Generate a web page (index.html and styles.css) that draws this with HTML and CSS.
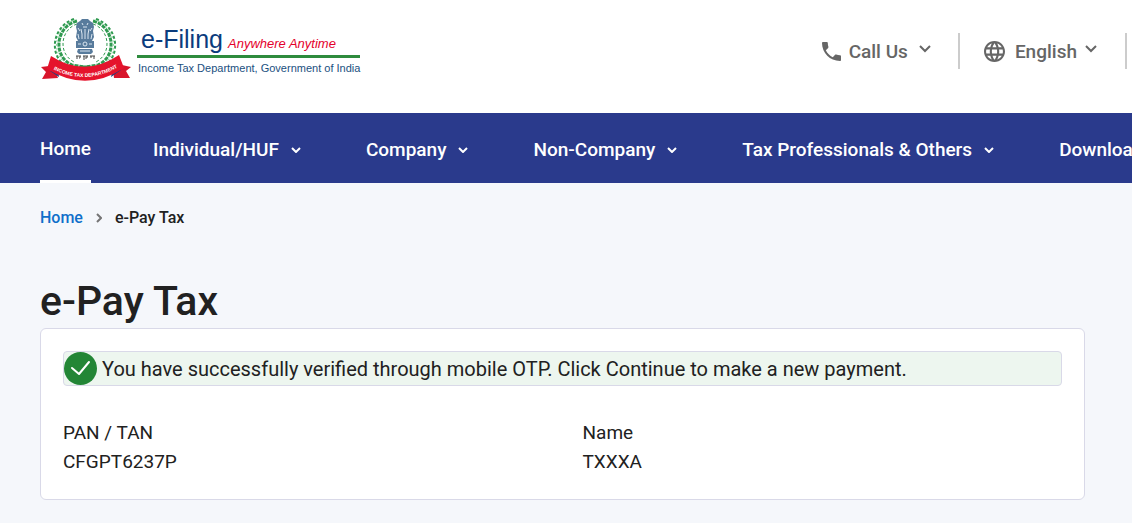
FILE: index.html
```html
<!DOCTYPE html>
<html lang="en">
<head>
    <meta charset="UTF-8" />
    <meta name="viewport" content="width=device-width, initial-scale=1.0"/>
    <title>e-Pay Tax</title>
    <link rel="stylesheet" href="styles.css">
</head>
<body>
    <header class="header">
        <a class="logo" href="#">
            <svg class="emblem" viewBox="0 0 92 64" role="img" aria-label="Income Tax Department emblem">
                <!-- wreath -->
                <g fill="none" stroke="#2f9a50">
                    <path d="M37 3C16 8 12 38 32 47L51 50" stroke-width="3" stroke-dasharray="4 1"/>
                    <path d="M53 3C74 8 78 38 58 47L39 50" stroke-width="3" stroke-dasharray="4 1"/>
                    <path d="M34 1C11 9 8 40 29 50M56 1C79 9 82 40 61 50" stroke-width="2" stroke-dasharray="3 2"/>
                    <path d="M37 6C21 11 17 35 34 44M53 6C69 11 73 35 56 44" stroke-width="1" stroke-dasharray="3 2"/>
                    <path d="M35 2C13 9 10 39 30 48M55 2C77 9 80 39 60 48" stroke="#8fd0a1" stroke-width="1" stroke-dasharray="2 2"/>
                </g>
                <!-- lion capital -->
                <g fill="#587b9c">
                    <path d="M40 3l2-2h6l2 2 3 2 1 4-1 4 1 6-2 4H38l-2-4 1-6-1-4 1-4z"/>
                    <path d="M36 23h18v7H36zM38 31h14l1 3-2 2H39l-2-2z"/>
                </g>
                <g fill="none" stroke="#dbe7f1" stroke-width="1">
                    <path d="M42 5l1 2M48 5l-1 2M43 9h4M41 11l1 5v5M49 11l-1 5v5M45 11v10M38 10l2 3M52 10l-2 3M38 16l1 5M52 16l-1 5"/>
                    <circle cx="45" cy="26" r="2"/>
                    <path d="M38 26h3M49 26h3M40 33h10"/>
                </g>
                <path d="M36 38h5M43 38h5M50 38h5M37 38v3M40 38v2M39 40h1M44 38v4M47 38v2M45 40h2M51 38v2M54 38v3" fill="none" stroke="#444" stroke-width="1"/>
                <!-- ribbon -->
                <path d="M9 48L1 49l5 5-4 7 16-1-3-8zM82 47l9 2-5 4 4 7-16 0-1-8z" fill="#d8152b"/>
                <path d="M10 53l9 6-1-8zM81 52l-10 7 2-9z" fill="#24407c"/>
                <path d="M11 38Q45 60 79 37L84 50Q46 75 7 51Z" fill="#e5132c"/>
                <path id="ribbon-line" d="M9 49Q45 70 82 47" fill="none"/>
                <text class="ribbon-text"><textPath href="#ribbon-line" startOffset="50%">INCOME TAX DEPARTMENT</textPath></text>
            </svg>
            <span class="brand">
                <span class="brand-top">
                    <span class="brand-name">e-Filing</span>
                    <span class="brand-slogan">Anywhere Anytime</span>
                </span>
                <span class="brand-dept">Income Tax Department, Government of India</span>
            </span>
        </a>
        <div class="tools">
            <button class="tool call" type="button">
                <svg class="phone-icon" viewBox="3 3 18 18"><path fill="currentColor" d="M6.62 10.79c1.44 2.83 3.76 5.14 6.59 6.59l2.2-2.2c.27-.27.67-.36 1.02-.24 1.12.37 2.33.57 3.57.57.55 0 1 .45 1 1V20c0 .55-.45 1-1 1-9.39 0-17-7.61-17-17 0-.55.45-1 1-1h3.5c.55 0 1 .45 1 1 0 1.25.2 2.45.57 3.57.11.35.03.74-.25 1.02l-2.2 2.2z"/></svg>
                Call Us
                <svg class="tool-arrow" viewBox="0 0 12 8"><path d="M1 1l5 5 5-5"/></svg>
            </button>
            <button class="tool language" type="button">
                <svg class="globe-icon" viewBox="2 2 20 20"><path fill="currentColor" d="M11.99 2C6.47 2 2 6.48 2 12s4.47 10 9.99 10C17.52 22 22 17.52 22 12S17.52 2 11.99 2zm6.93 6h-2.95c-.32-1.25-.78-2.45-1.38-3.56 1.84.63 3.37 1.91 4.33 3.56zM12 4.04c.83 1.2 1.48 2.53 1.91 3.96h-3.82c.43-1.43 1.08-2.76 1.91-3.96zM4.26 14C4.1 13.36 4 12.69 4 12s.1-1.36.26-2h3.38c-.08.66-.14 1.32-.14 2s.06 1.34.14 2H4.26zm.82 2h2.95c.32 1.25.78 2.45 1.38 3.56-1.84-.63-3.37-1.9-4.33-3.56zm2.95-8H5.08c.96-1.66 2.49-2.93 4.33-3.56C8.81 5.55 8.35 6.75 8.03 8zM12 19.96c-.83-1.2-1.48-2.53-1.91-3.96h3.82c-.43 1.43-1.08 2.76-1.91 3.96zM14.34 14H9.66c-.09-.66-.16-1.32-.16-2s.07-1.35.16-2h4.68c.09.65.16 1.32.16 2s-.07 1.34-.16 2zm.25 5.56c.6-1.11 1.06-2.31 1.38-3.56h2.95c-.96 1.65-2.49 2.93-4.33 3.56zM16.36 14c.08-.66.14-1.32.14-2s-.06-1.34-.14-2h3.38c.16.64.26 1.31.26 2s-.1 1.36-.26 2h-3.38z"/></svg>
                English
                <svg class="tool-arrow" viewBox="0 0 12 8"><path d="M1 1l5 5 5-5"/></svg>
            </button>
        </div>
    </header>

    <nav class="navbar">
        <a class="nav-item active" href="#">Home</a>
        <button class="nav-item" type="button">Individual/HUF <svg class="nav-arrow" viewBox="0 0 10 6"><path d="M1 1l4 4 4-4"/></svg></button>
        <button class="nav-item" type="button">Company <svg class="nav-arrow" viewBox="0 0 10 6"><path d="M1 1l4 4 4-4"/></svg></button>
        <button class="nav-item" type="button">Non-Company <svg class="nav-arrow" viewBox="0 0 10 6"><path d="M1 1l4 4 4-4"/></svg></button>
        <button class="nav-item" type="button">Tax Professionals &amp; Others <svg class="nav-arrow" viewBox="0 0 10 6"><path d="M1 1l4 4 4-4"/></svg></button>
        <a class="nav-item" href="#">Downloads</a>
    </nav>

    <main class="content">
        <nav class="breadcrumb" aria-label="Breadcrumb">
            <a href="#">Home</a>
            <svg class="crumb-arrow" viewBox="0 0 6 10"><path d="M1 1l4 4-4 4"/></svg>
            <span>e-Pay Tax</span>
        </nav>

        <h1 class="title">e-Pay Tax</h1>

        <section class="card">
            <div class="alert" role="status">
                <svg class="check-icon" viewBox="0 0 33 33"><circle cx="16.5" cy="16.5" r="16.5" fill="#238636"/><path d="M8 16l7 6L25 10" fill="none" stroke="#fff" stroke-width="2" stroke-linecap="round" stroke-linejoin="round"/></svg>
                <span>You have successfully verified through mobile OTP. Click Continue to make a new payment.</span>
            </div>
            <dl class="details">
                <div>
                    <dt>PAN / TAN</dt>
                    <dd>CFGPT6237P</dd>
                </div>
                <div>
                    <dt>Name</dt>
                    <dd>TXXXA</dd>
                </div>
            </dl>
        </section>
    </main>
</body>
</html>
```
FILE: styles.css
```css
* {
    box-sizing: border-box;
}

body {
    margin: 0;
    font-family: Roboto, sans-serif;
    background: #f5f7fb;
    color: #212121;
    overflow-x: hidden;
}

button {
    font-family: inherit;
    border: none;
    background: none;
    padding: 0;
    cursor: pointer;
}

a {
    text-decoration: none;
}

/* Header */
.header {
    display: flex;
    justify-content: space-between;
    align-items: flex-start;
    background: #fff;
    padding: 18px 5px 31px 40px;
}

.logo {
    display: flex;
    gap: 5px;
}

.emblem {
    width: 92px;
    height: 64px;
}

.ribbon-text {
    font-family: "Liberation Sans", Arial, sans-serif;
    font-size: 5px;
    font-weight: bold;
    fill: #fff;
    text-anchor: middle;
}

.brand {
    font-family: "Liberation Sans", Arial, sans-serif;
    padding-top: 6px;
}

.brand-top {
    display: flex;
    align-items: baseline;
    gap: 5px;
    padding: 0 4px;
    border-bottom: 3px solid #2e8b3d;
}

.brand-name {
    font-size: 25px;
    line-height: 31px;
    color: #0b3c7d;
}

.brand-slogan {
    font-size: 13px;
    font-style: italic;
    color: #e4002b;
}

.brand-dept {
    display: block;
    font-size: 11px;
    line-height: 20px;
    color: #1a5080;
    padding-left: 1px;
}

.tools {
    display: flex;
    padding-top: 15px;
}

.tool {
    display: flex;
    align-items: center;
    height: 36px;
    font-size: 19px;
    font-weight: 500;
    color: #666;
    border-right: 2px solid #ccc;
}

.call {
    padding-right: 27px;
}

.language {
    padding: 0 28px 0 24px;
}

.phone-icon {
    width: 19px;
    height: 19px;
    margin-right: 8px;
}

.globe-icon {
    width: 21px;
    height: 21px;
    margin-right: 10px;
}

.tool-arrow {
    width: 12px;
    height: 8px;
    margin-left: 11px;
    margin-bottom: 4px;
}

.language .tool-arrow {
    margin-left: 8px;
}

.tool-arrow path,
.nav-arrow path,
.crumb-arrow path {
    fill: none;
    stroke: currentColor;
    stroke-width: 2;
}

/* Navigation */
.navbar {
    display: flex;
    padding-left: 40px;
    background: #2a3a8c;
    overflow: hidden;
}

.nav-item {
    display: flex;
    align-items: center;
    flex-shrink: 0;
    gap: 12px;
    height: 70px;
    margin-right: 65px;
    font-size: 19px;
    font-weight: 500;
    color: #fff;
    padding-top: 3px;
    white-space: nowrap;
}

.nav-item.active {
    margin-right: 62px;
    border-bottom: 3px solid #fff;
}

.nav-arrow {
    width: 10px;
    height: 6px;
}

/* Page content */
.content {
    padding: 25px 47px 23px 40px;
}

.breadcrumb {
    display: flex;
    align-items: center;
    gap: 13px;
    font-size: 16px;
    line-height: 20px;
    font-weight: 500;
}

.breadcrumb a {
    color: #0f6fca;
}

.crumb-arrow {
    width: 6px;
    height: 10px;
    color: #757575;
}

.title {
    margin: 46px 0 0;
    font-size: 41px;
    line-height: 54px;
    font-weight: 500;
}

.card {
    padding: 22px 22px 23px;
    background: #fff;
    border: 1px solid #d9d9e8;
    border-radius: 6px;
}

.alert {
    display: flex;
    align-items: center;
    gap: 5px;
    background: #edf6ef;
    border: 1px solid #d9d9e8;
    border-radius: 4px;
    font-size: 20px;
}

.check-icon {
    width: 33px;
    height: 33px;
    flex-shrink: 0;
}

.details {
    display: grid;
    grid-template-columns: 1fr 1fr;
    gap: 40px;
    margin: 32px 0 0;
    font-size: 19px;
    line-height: 29px;
}

.details dd {
    margin: 0;
}
```
